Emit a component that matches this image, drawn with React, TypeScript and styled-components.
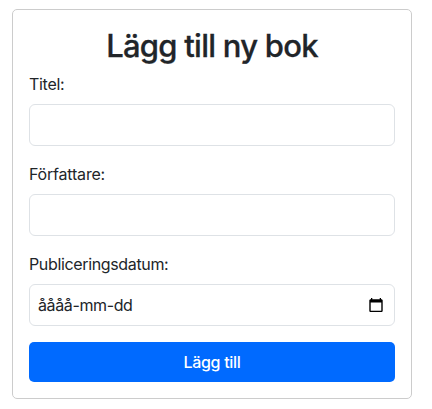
import React from 'react';
import styled, { createGlobalStyle } from 'styled-components';

const GlobalStyle = createGlobalStyle`
  *, *::before, *::after { box-sizing: border-box; }
  body {
    margin: 0;
    background: #fff;
    color: #212529;
    font-family: Inter, "Liberation Sans", sans-serif;
    font-size: 16px;
    line-height: 24px;
    -webkit-font-smoothing: antialiased;
  }
`;

const Card = styled.form`
  width: 400px;
  height: 390px;
  margin: 9px 0 0 12px;
  padding: 16px;
  border: 1px solid #ccc;
  border-radius: 5px;
`;

const Title = styled.h2`
  margin: 0 0 8px;
  height: 38px;
  font-size: 31px;
  font-weight: 500;
  line-height: 40px;
  letter-spacing: -0.75px;
  -webkit-text-stroke: 0.3px currentColor;
  text-align: center;
  white-space: nowrap;
`;

const Field = styled.div`
  margin-bottom: 16px;
`;

const Label = styled.label<{ $spacing: number }>`
  display: block;
  margin-bottom: 8px;
  letter-spacing: ${(p) => p.$spacing}px;
`;

const TextInput = styled.input`
  display: block;
  width: 100%;
  height: 42px;
  padding: 8px;
  border: 1px solid #dee2e6;
  border-radius: 6px;
  background: #fff;
  color: inherit;
  font: inherit;
  outline: none;
`;

const DateInput = styled.div`
  display: flex;
  align-items: center;
  justify-content: space-between;
  height: 42px;
  padding: 0 11px 0 8px;
  border: 1px solid #dee2e6;
  border-radius: 6px;
  letter-spacing: -0.38px;
`;

const SubmitButton = styled.button`
  display: block;
  width: 100%;
  height: 40px;
  padding: 0;
  border: 0;
  border-radius: 5px;
  background: #006aff;
  color: #fff;
  font: inherit;
  font-weight: 500;
  letter-spacing: -0.3px;
`;

const CalendarIcon = () => (
  <svg width="14" height="15" viewBox="0 0 14 15" aria-hidden="true">
    <path
      fill="#000"
      fillRule="evenodd"
      d="M2 0h1.3v1.3h7.4V0H12v1.3h.4c.7 0 1.3.6 1.3 1.3v10.1c0 .7-.6 1.3-1.3 1.3H1.6C.9 14 .3 13.4.3 12.7V2.6c0-.7.6-1.3 1.3-1.3H2zM1.7 4.5v8.3h10.6V4.5z"
    />
  </svg>
);

export default function App() {
  return (
    <>
      <GlobalStyle />
      <Card onSubmit={(e) => e.preventDefault()}>
        <Title>Lägg till ny bok</Title>
        <Field>
          <Label htmlFor="title" $spacing={-0.3}>Titel:</Label>
          <TextInput id="title" />
        </Field>
        <Field>
          <Label htmlFor="author" $spacing={-0.2}>Författare:</Label>
          <TextInput id="author" />
        </Field>
        <Field>
          <Label as="div" $spacing={-0.35}>Publiceringsdatum:</Label>
          <DateInput>
            <span>åååå-mm-dd</span>
            <CalendarIcon />
          </DateInput>
        </Field>
        <SubmitButton type="submit">Lägg till</SubmitButton>
      </Card>
    </>
  );
}
